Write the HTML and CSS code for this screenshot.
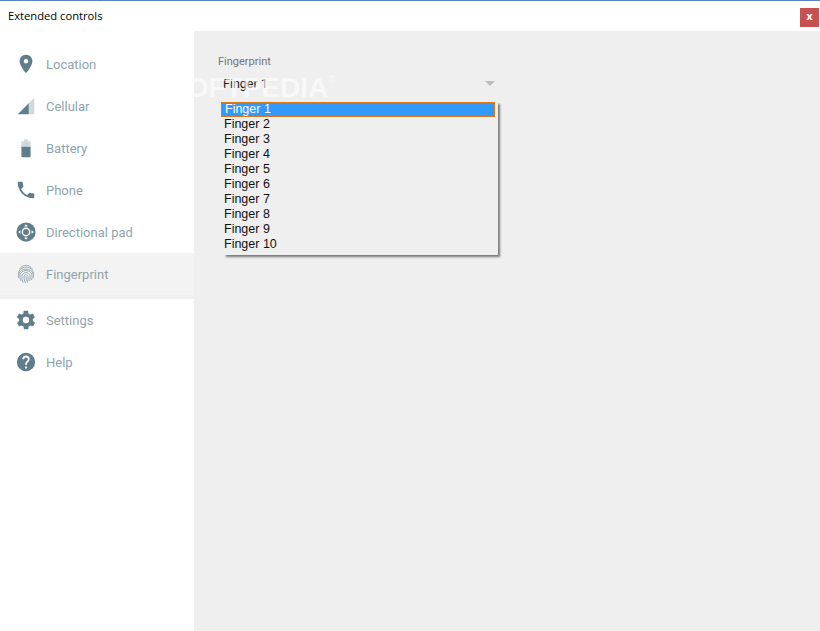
FILE: index.html
```html
<!DOCTYPE html>
<html lang="en">
<head>
<meta charset="utf-8">
<title>Extended controls</title>
<link rel="stylesheet" href="styles.css">
</head>
<body>
<div class="window">
  <header class="titlebar">
    <span class="title">Extended controls</span>
    <span class="close">x</span>
  </header>
  <div class="main">
    <nav class="sidebar">
      <div class="nav-group">
        <div class="nav-item">
          <svg class="icon" viewBox="0 0 24 24"><path d="M12 2C8.100 2 5 5.100 5 9c0 5.200 7 13 7 13s7-7.800 7-13c0-3.900-3.100-7-7-7zm0 9.500a2.500 2.500 0 1 1 0-5 2.500 2.500 0 0 1 0 5z"/></svg>
          <span>Location</span>
        </div>
        <div class="nav-item">
          <svg class="icon" viewBox="0 0 24 24"><path class="faint" d="M21 3v18h-6V9z"/><path d="M15 9v12H3z"/></svg>
          <span>Cellular</span>
        </div>
        <div class="nav-item">
          <svg class="icon" viewBox="0 0 24 24"><path class="faint" d="M10 2.500h4v2h3v6H7v-6h3z"/><path d="M7 10.500h10V21a1 1 0 0 1-1 1H8a1 1 0 0 1-1-1z"/></svg>
          <span>Battery</span>
        </div>
        <div class="nav-item">
          <svg class="icon" viewBox="0 0 24 24"><path d="M6.600 10.800c1.400 2.800 3.800 5.100 6.600 6.600l2.200-2.200c.3-.3.700-.4 1-.2 1.100.4 2.300.6 3.600.6.600 0 1 .4 1 1V20c0 .6-.4 1-1 1C10.600 21 3 13.400 3 4c0-.6.400-1 1-1h3.500c.6 0 1 .4 1 1 0 1.300.2 2.500.6 3.600.1.300 0 .7-.2 1z"/></svg>
          <span>Phone</span>
        </div>
        <div class="nav-item">
          <svg class="icon" viewBox="0 0 24 24"><circle cx="12" cy="12" r="10.500"/><circle class="white" cx="12" cy="12" r="4.800"/><circle cx="12" cy="12" r="3.200"/><path class="white" d="M12 3.500l2 2.400h-4zM12 20.500l-2-2.400h4zM3.500 12l2.400-2v4zM20.500 12l-2.400 2v-4z"/></svg>
          <span>Directional pad</span>
        </div>
        <div class="nav-item active">
          <svg class="icon print" viewBox="0 0 24 24" fill="none">
            <path d="M5 6.500C7 3.800 9.300 2.500 12 2.500s5 1.300 7 4"/>
            <path d="M3.500 12C4 7.500 7.500 4.500 12 4.500s8 3 8.500 7.500"/>
            <path d="M4 16.500c-.3-1.500-.2-3 .1-4.500C5 8.700 8.200 6.700 12 6.700s7 2 7.900 5.300c.4 1.500.4 3 .1 4.500"/>
            <path d="M6.500 19.500c-1-2-1.300-4.500-1-6.500.6-3 3.300-4.700 6.500-4.700s5.900 1.700 6.500 4.700c.3 2 .1 4-.5 5.500"/>
            <path d="M9 21.500c-1.300-2.500-1.700-5-1.400-7.500.3-2 2.200-3.500 4.400-3.500s4.100 1.500 4.400 3.500c.3 2 .1 4-.4 5.500"/>
            <path d="M11.500 22c-1-2-1.800-4.500-1.600-7 .1-1.300 1-2.300 2.100-2.300s2 1 2.200 2.300c.2 2 .2 3.500-.2 5"/>
            <path d="M12 14.500c-.1 2.500.6 5 2 7"/>
          </svg>
          <span>Fingerprint</span>
        </div>
      </div>
      <div class="nav-divider"></div>
      <div class="nav-group">
        <div class="nav-item">
          <svg class="icon" viewBox="0 0 24 24"><path d="M19.400 13c.1-.3.100-.7.100-1s0-.7-.1-1l2.100-1.600c.2-.2.200-.4.100-.6l-2-3.500c-.1-.2-.4-.3-.6-.2l-2.500 1c-.5-.4-1.100-.7-1.700-1l-.4-2.700c0-.2-.2-.4-.5-.4h-4c-.2 0-.4.200-.5.400l-.4 2.700c-.6.300-1.200.6-1.700 1l-2.500-1c-.2-.1-.5 0-.6.200l-2 3.500c-.1.200-.1.400.1.600L4.600 11c-.1.300-.1.700-.1 1s0 .7.100 1l-2.100 1.600c-.2.200-.2.400-.1.600l2 3.500c.1.200.4.300.6.200l2.500-1c.5.400 1.100.7 1.700 1l.4 2.700c0 .2.200.4.500.4h4c.2 0 .4-.2.500-.4l.4-2.700c.6-.3 1.200-.6 1.700-1l2.500 1c.2.100.5 0 .6-.2l2-3.500c.1-.2.100-.4-.1-.6zM12 15.500a3.500 3.500 0 1 1 0-7 3.500 3.500 0 0 1 0 7z"/></svg>
          <span>Settings</span>
        </div>
        <div class="nav-item">
          <svg class="icon" viewBox="0 0 24 24"><path d="M12 2a10 10 0 1 0 0 20 10 10 0 0 0 0-20zm1 17h-2v-2h2zm2.100-7.700l-.9.900c-.8.700-1.200 1.300-1.200 2.800h-2v-.5c0-1.100.4-2.100 1.200-2.800l1.200-1.300c.4-.3.600-.8.600-1.400a2 2 0 0 0-4 0H8a4 4 0 0 1 8 0c0 .9-.4 1.700-.9 2.300z"/></svg>
          <span>Help</span>
        </div>
      </div>
    </nav>
    <section class="content">
      <div class="field-label">Fingerprint</div>
      <div class="select">
        <span>Finger 1</span>
        <span class="arrow"></span>
      </div>
      <ul class="dropdown">
        <li class="selected">Finger 1</li>
        <li>Finger 2</li>
        <li>Finger 3</li>
        <li>Finger 4</li>
        <li>Finger 5</li>
        <li>Finger 6</li>
        <li>Finger 7</li>
        <li>Finger 8</li>
        <li>Finger 9</li>
        <li>Finger 10</li>
      </ul>
    </section>
  </div>
  <div class="watermark">SOFTPEDIA<sup>®</sup></div>
</div>
</body>
</html>
```
FILE: styles.css
```css
* { box-sizing: border-box; }
html, body { margin: 0; padding: 0; }
body {
  width: 820px;
  height: 631px;
  overflow: hidden;
  background: #fff;
  font-family: Roboto, "Liberation Sans", sans-serif;
}
.window {
  position: relative;
  display: flex;
  flex-direction: column;
  width: 820px;
  height: 631px;
  border-top: 1px solid #5b7fc4;
}
.titlebar {
  display: flex;
  align-items: flex-start;
  justify-content: space-between;
  height: 30px;
  flex: none;
  padding: 7px 1px 0 8px;
  background: #fff;
}
.title {
  font-family: "Open Sans", "Liberation Sans", sans-serif;
  font-size: 11.200px;
  line-height: 16px;
  color: #000;
}
.close {
  width: 19px;
  height: 19px;
  background: #c75050;
  color: #fff;
  font-family: "DejaVu Sans", sans-serif;
  font-size: 10px;
  font-weight: 700;
  line-height: 17px;
  text-align: center;
}
.main {
  display: flex;
  flex: 1;
  min-height: 0;
}
.sidebar {
  width: 194px;
  flex: none;
  padding-top: 12px;
  background: #fff;
}
.nav-item {
  display: flex;
  align-items: center;
  height: 42px;
  padding-left: 15px;
  font-size: 13px;
  color: #90a4ae;
}
.nav-item span { margin-left: 9px; }
.nav-item.active { background: #f3f3f3; }
.nav-divider {
  height: 4px;
  background: #efefef;
}
.icon {
  width: 22px;
  height: 22px;
  flex: none;
  fill: #607d8b;
}
.icon .faint { fill: #cfd8dc; }
.icon .white { fill: #fff; }
.icon.print {
  fill: none;
  stroke: #90a4ae;
  stroke-width: 1;
}
.content {
  position: relative;
  flex: 1;
  padding: 24px 24px 0 24px;
  background: #efefef;
}
.field-label {
  font-size: 11px;
  line-height: 13px;
  color: #757575;
}
.select {
  display: flex;
  align-items: center;
  justify-content: space-between;
  width: 277px;
  height: 20px;
  margin-top: 5px;
  padding: 0 0 0 5px;
  font-size: 12.500px;
  color: #212121;
}
.arrow {
  width: 0;
  height: 0;
  border-left: 5px solid transparent;
  border-right: 5px solid transparent;
  border-top: 5px solid #bdbdbd;
}
.dropdown {
  position: absolute;
  left: 30px;
  top: 71px;
  width: 274px;
  height: 153px;
  margin: 0;
  padding: 0;
  list-style: none;
  background: #efefef;
  box-shadow: 2px 2px 2px #7a7a7a;
  font-family: "Liberation Sans", Arial, sans-serif;
  font-size: 12.500px;
  line-height: 15px;
  color: #111;
}
.dropdown li {
  height: 15px;
  padding-left: 0;
  white-space: nowrap;
}
.dropdown li.selected {
  margin-left: -3px;
  padding-left: 3px;
  width: 274px;
  background: #3399ff;
  color: #fff;
  line-height: 13px;
  border: 1px solid #d97b1a;
}
.watermark {
  position: absolute;
  left: 168px;
  top: 70px;
  font-family: "Liberation Sans", Arial, sans-serif;
  font-size: 28px;
  font-weight: 700;
  line-height: 34px;
  color: #ffffff;
  opacity: 0.6;
  pointer-events: none;
}
.watermark sup {
  font-size: 10px;
  font-weight: 400;
  vertical-align: 14px;
  line-height: 0;
}
```
